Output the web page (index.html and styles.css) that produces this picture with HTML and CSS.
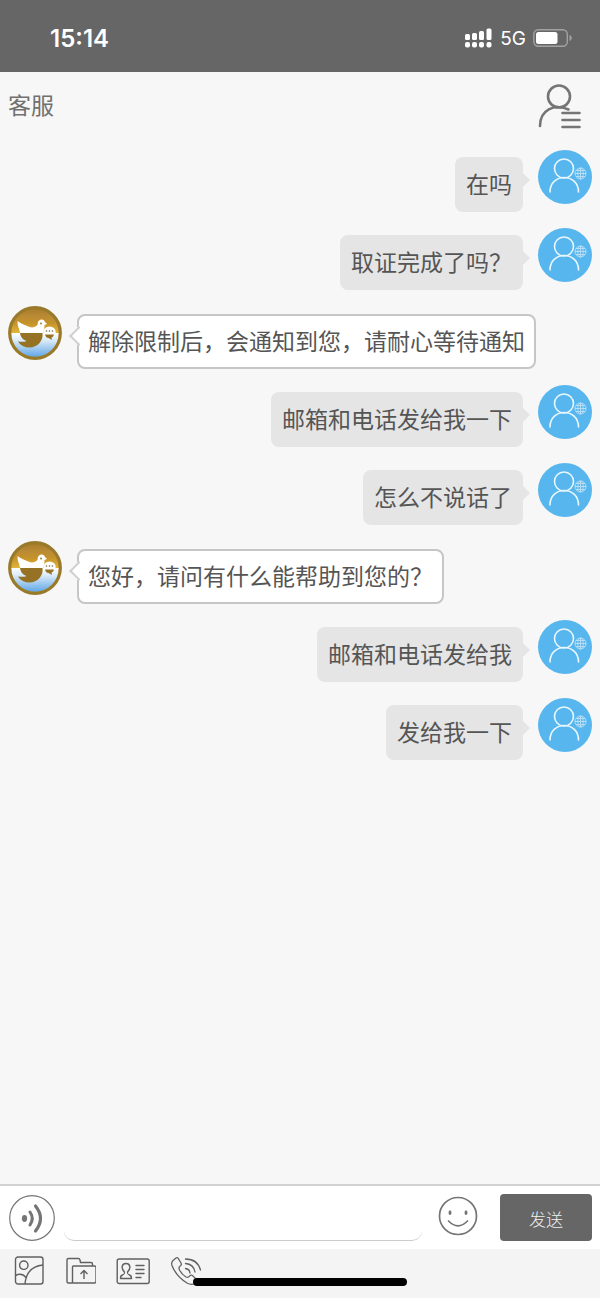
FILE: index.html
```html
<!DOCTYPE html>
<html lang="zh-CN">
<head>
<meta charset="utf-8">
<meta name="viewport" content="width=device-width, initial-scale=1">
<title>客服</title>
<link rel="stylesheet" href="styles.css">
</head>
<body>
<svg class="defs" aria-hidden="true">
  <defs>
    <linearGradient id="gold" x1="0" y1="0" x2="0" y2="1">
      <stop offset="0" stop-color="#a67a28"/>
      <stop offset="0.16" stop-color="#b98a35"/>
      <stop offset="0.3" stop-color="#c4922a"/>
      <stop offset="0.5" stop-color="#e2b53a"/>
    </linearGradient>
    <linearGradient id="water" x1="0" y1="0" x2="0" y2="1">
      <stop offset="0" stop-color="#ffffff"/>
      <stop offset="0.3" stop-color="#dcebf9"/>
      <stop offset="1" stop-color="#5fa6e6"/>
    </linearGradient>
    <symbol id="user" viewBox="0 0 54 54">
      <circle cx="27" cy="27" r="27" fill="#57b6ee"/>
      <g fill="none" stroke="#e9f7ff" stroke-width="1.600" stroke-linecap="round">
        <circle cx="26" cy="18.500" r="9.500"/>
        <path d="M12 42C12 22.700 40.500 22.700 40.500 42"/>
      </g>
      <g fill="none" stroke="#b5def7" stroke-width="1">
        <circle cx="42.500" cy="23.500" r="5.500"/>
        <ellipse cx="42.500" cy="23.500" rx="2.700" ry="5.500"/>
        <path d="M42.500 18v11M37 23.500h11M38 20.500h9M38 26.500h9"/>
      </g>
    </symbol>
    <symbol id="agent" viewBox="0 0 54 54">
      <circle cx="27" cy="27" r="25.500" fill="url(#gold)"/>
      <path d="M3 27h48a24 24 0 0 1-48 0z" fill="url(#water)"/>
      <path d="M9.500 15c4 3 8 4 12 6 3 1 6 0 8-2 0-3 1-5 3.500-5.500 2-.4 3.500.5 4 2.500l2 2-2.500 1c0 3-.5 5-1.500 8.500H13c-1.500-1.500-2-3-1.500-4-1.500-2-2-5-2-8.500z" fill="#fff"/>
      <path d="M12 27h22.500c1 8-5 14.500-13 14.500-5 0-9-2-11.500-6 3.500.500 6.500.500 8.500-.500-4-1.500-6-4-6.500-8z" fill="#967224"/>
      <circle cx="33" cy="17.500" r="0.900" fill="#967224"/>
      <ellipse cx="41.500" cy="26" rx="6.200" ry="5.500" fill="#fff"/>
      <path d="M37 28.500h9c-.5 1.500-1 2.500-2.500 3l.5 2.500-3.500-2c-2 0-3-1.500-3.500-3.500z" fill="#967224"/>
      <g fill="#7b6a44"><circle cx="38.500" cy="25" r="0.800"/><circle cx="41.500" cy="25" r="0.800"/><circle cx="44.500" cy="25" r="0.800"/></g>
      <circle cx="27" cy="27" r="25.300" fill="none" stroke="#997a2a" stroke-width="3.200"/>
    </symbol>
  </defs>
</svg>

<div class="status">
  <time class="clock">15:14</time>
  <div class="signals">
    <svg class="cell" width="28" height="20" viewBox="0 0 28 20" fill="#fff" aria-hidden="true">
      <rect x="0" y="6" width="5" height="6" rx="1.500"/><rect x="7" y="5" width="5" height="7" rx="1.500"/><rect x="14" y="3" width="5" height="9" rx="1.500"/><rect x="21.500" y="0.500" width="5" height="11.500" rx="1.500"/>
      <rect x="0" y="14" width="5" height="5.500" rx="2"/><rect x="7" y="14" width="5" height="5.500" rx="2"/><rect x="14" y="14" width="5" height="5.500" rx="2"/><rect x="21.500" y="14" width="5" height="5.500" rx="2"/>
    </svg>
    <span class="network">5G</span>
    <svg class="battery" width="40" height="18" viewBox="0 0 40 18" aria-hidden="true">
      <rect x="0.800" y="0.800" width="33.500" height="16.400" rx="4.500" fill="none" stroke="#a2a2a2" stroke-width="1.400"/>
      <rect x="3" y="3" width="21.500" height="12" rx="2.500" fill="#fff"/>
      <path d="M36.500 6c3 1 3 5 0 6z" fill="#a2a2a2"/>
    </svg>
  </div>
</div>

<header class="header">
  <h1 class="title">客服</h1>
  <button class="icon-button" type="button" aria-label="联系人菜单">
    <svg width="44" height="46" viewBox="0 0 44 46" fill="none" stroke="#757575" stroke-width="2.600" stroke-linecap="round" aria-hidden="true">
      <circle cx="21" cy="12.500" r="11"/>
      <path d="M2 42C2 26 16 19 30.500 25.500"/>
      <path d="M24.500 29h17M24.500 36h17M24.500 43h17"/>
    </svg>
  </button>
</header>

<main class="messages">
  <div class="row sent"><p class="bubble">在吗</p><svg class="avatar"><use href="#user"/></svg></div>
  <div class="row sent"><p class="bubble">取证完成了吗？</p><svg class="avatar"><use href="#user"/></svg></div>
  <div class="row received"><svg class="avatar"><use href="#agent"/></svg><p class="bubble">解除限制后，会通知到您，请耐心等待通知</p></div>
  <div class="row sent"><p class="bubble">邮箱和电话发给我一下</p><svg class="avatar"><use href="#user"/></svg></div>
  <div class="row sent"><p class="bubble">怎么不说话了</p><svg class="avatar"><use href="#user"/></svg></div>
  <div class="row received"><svg class="avatar"><use href="#agent"/></svg><p class="bubble">您好，请问有什么能帮助到您的？</p></div>
  <div class="row sent"><p class="bubble">邮箱和电话发给我</p><svg class="avatar"><use href="#user"/></svg></div>
  <div class="row sent"><p class="bubble">发给我一下</p><svg class="avatar"><use href="#user"/></svg></div>
</main>

<footer class="footer">
  <form class="composer">
    <button class="icon-button" type="button" aria-label="语音">
      <svg width="46" height="46" viewBox="0 0 46 46" fill="none" stroke="#757575" aria-hidden="true">
        <circle cx="23" cy="23" r="22.300" stroke-width="1.200"/>
        <ellipse cx="15.500" cy="23.500" rx="2.600" ry="3.400" fill="#757575" stroke="none"/>
        <path d="M21 17q4.500 6.500 0 13" stroke-width="3" stroke-linecap="round"/>
        <path d="M26.500 11q10 12.500 0 25" stroke-width="3.200" stroke-linecap="round"/>
      </svg>
    </button>
    <input class="entry" type="text" aria-label="消息">
    <button class="icon-button smile" type="button" aria-label="表情">
      <svg width="40" height="40" viewBox="0 0 40 40" fill="none" stroke="#757575" stroke-width="1.700" stroke-linecap="round" aria-hidden="true">
        <circle cx="20" cy="20" r="18.500"/>
        <path d="M10.500 25q9.500 9.500 19 0"/>
        <path d="M12 16v1.500M28 16v1.500" stroke-width="2.800"/>
      </svg>
    </button>
    <button class="send" type="submit">发送</button>
  </form>
  <nav class="tools">
    <button class="icon-button" type="button" aria-label="图片">
      <svg width="30" height="30" viewBox="0 0 30 30" fill="none" stroke="#606060" stroke-width="1.400" aria-hidden="true">
        <rect x="1.500" y="1" width="27.500" height="27" rx="2.500"/>
        <circle cx="9.800" cy="9.200" r="4.200"/>
        <path d="M11 28C12 17 18 10 29 9M1.500 19.500c4-2 8-1 10.500 2"/>
      </svg>
    </button>
    <button class="icon-button" type="button" aria-label="文件">
      <svg width="32" height="30" viewBox="0 0 32 30" fill="none" stroke="#606060" stroke-width="1.400" stroke-linejoin="round" aria-hidden="true">
        <path d="M8 27H4.500q-1.500 0-1.500-1.500V4q0-1.500 1.500-1.500h10q1 0 1.500 1.500l.500 2.500h10.500q1.500 0 1.500 1.500v2"/>
        <path d="M8.500 11q0-1 1-1h21q1.500 0 1.500 1.500v14q0 1.500-1.500 1.500H8.500z"/>
        <path d="M20 23v-8.500M16.500 18l3.500-3.500 3.500 3.500"/>
      </svg>
    </button>
    <button class="icon-button" type="button" aria-label="名片">
      <svg width="34" height="30" viewBox="0 0 34 30" fill="none" stroke="#606060" stroke-width="1.400" stroke-linecap="round" stroke-linejoin="round" aria-hidden="true">
        <rect x="1.200" y="3" width="32" height="24.500" rx="2"/>
        <path d="M8.500 16C4.500 12 6 7.500 10 7.500s5.500 4.500 1.500 8.500c0 2 0 2.500 2 3s2 1.500 2 3.500h-11c0-2 0-3 2-3.500s2-1 2-3zM20 9.500h8M20 13.500h8M20 17.500h8M20 21.500h5"/>
      </svg>
    </button>
    <button class="icon-button" type="button" aria-label="通话">
      <svg width="32" height="30" viewBox="0 0 32 30" fill="none" stroke="#606060" stroke-width="1.300" stroke-linecap="round" stroke-linejoin="round" aria-hidden="true">
        <path d="M3 4.500l3-2.500c1-.7 1.700-.5 2.300.5L11 7c.7 1.300.5 2-.5 2.800-2 1.200-2 2.200-1 4.200 1.500 3 4 5.500 6.500 7 2 1 2.500.5 3.500-.8s2-1.500 3-.6l4.500 4.400c1 1 .5 2-.5 2.700-3 2-6 2.300-9.500.3C10.500 23 4.500 16 2 9.500 1.300 7.500 1.500 6 3 4.500z"/>
        <path d="M15.500 12.500q4 .500 4.500 4.500M15.500 7.500q8 .500 9.500 8.500M15.500 3q12 0 15 11"/>
      </svg>
    </button>
  </nav>
</footer>
<div class="home-bar"></div>
</body>
</html>
```
FILE: styles.css
```css
* { box-sizing: border-box; }

body {
  margin: 0;
  min-height: 100vh;
  display: flex;
  flex-direction: column;
  position: relative;
  background: #f7f7f7;
  color: #555;
  font-family: "Liberation Sans", "Noto Sans CJK SC", sans-serif;
}

button, input { font: inherit; }
svg { display: block; flex: none; }
.defs { position: absolute; width: 0; height: 0; }

.icon-button {
  flex: none;
  padding: 0;
  border: 0;
  background: none;
}

.status {
  display: flex;
  align-items: center;
  justify-content: space-between;
  height: 72px;
  padding: 4px 27px 0 50px;
  background: #666;
  color: #fff;
  font-family: Inter, sans-serif;
}
.clock { font-size: 24px; font-weight: 600; }
.signals { display: flex; align-items: center; gap: 7px; }
.network { font-size: 19px; }

.header {
  display: flex;
  align-items: flex-start;
  justify-content: space-between;
  height: 78px;
  padding: 12px 18px 0 8px;
}
.title {
  margin: 5px 0 0;
  color: #707070;
  font-size: 23px;
  font-weight: 400;
  line-height: 34px;
}

.messages { flex: 1; }
.row {
  display: flex;
  gap: 15px;
  padding: 0 8px 16px;
}
.sent { justify-content: flex-end; }
.avatar { width: 54px; height: 54px; }

.bubble {
  position: relative;
  margin: 7px 0 0;
  padding: 11px 11px 9px;
  border-radius: 8px;
  background: #e5e5e5;
  font-size: 23px;
  line-height: 35px;
}
.sent .bubble::after {
  content: "";
  position: absolute;
  top: 16px;
  left: 100%;
  border: 7px solid transparent;
  border-left-color: #e5e5e5;
  border-right: 0;
}
.received { padding-bottom: 16px; }
.received .bubble {
  margin-top: 8px;
  padding: 9px 9px 7px;
  border: 2px solid #c6c6c6;
  background: #fff;
}
.received .bubble::before {
  content: "";
  position: absolute;
  top: 13px;
  left: -7px;
  width: 12px;
  height: 12px;
  border: solid #d0d0d0;
  border-width: 0 0 2px 2px;
  background: #fff;
  transform: rotate(45deg);
}

.footer { border-top: 2px solid #d2d2d2; background: #f4f4f4; }
.composer {
  display: flex;
  align-items: center;
  height: 63px;
  padding: 0 8px 0 9px;
  background: #fff;
}
.entry {
  flex: 1;
  min-width: 0;
  height: 47px;
  margin: 0 16px 0 9px;
  padding: 0 10px;
  border: 0;
  border-bottom: 1px solid #ccc;
  border-radius: 10px;
  outline: 0;
  background: #fff;
  font-size: 23px;
}
.smile { margin: 0 22px 4px 0; }
.send {
  width: 92px;
  height: 47px;
  padding: 2px 0 0;
  border: 0;
  border-radius: 4px;
  background: #666;
  color: #f0f0f0;
  font-size: 17px;
  font-weight: 300;
}
.tools {
  display: flex;
  align-items: flex-start;
  gap: 20px;
  height: 49px;
  padding: 7px 14px 0;
}

.home-bar {
  position: absolute;
  bottom: 12px;
  left: 50%;
  width: 214px;
  height: 8px;
  margin-left: -107px;
  border-radius: 4px;
  background: #000;
}
```
